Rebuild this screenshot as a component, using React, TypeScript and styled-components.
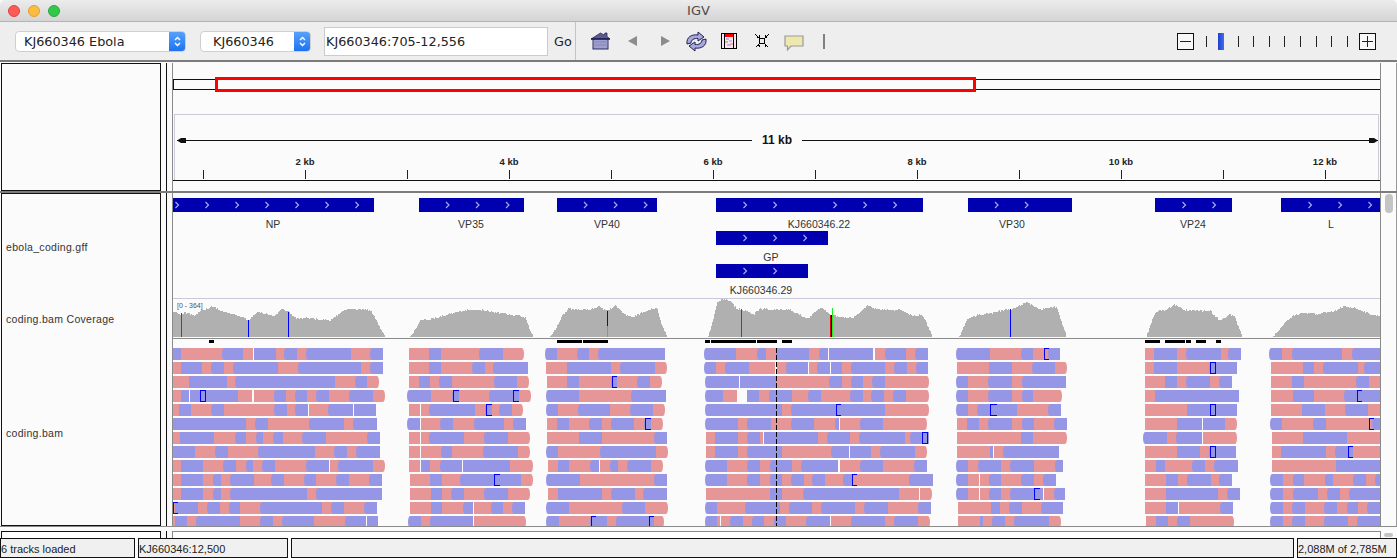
import React from "react";
import styled, { createGlobalStyle } from "styled-components";

const Global = createGlobalStyle`
  html, body { margin: 0; padding: 0; background: #fafafa; overflow: hidden; }
  * { box-sizing: border-box; }
`;

const Win = styled.div`
  width: 1397px; height: 558px; display: flex; flex-direction: column; overflow: hidden; background: #fafafa;
  font-family: "Liberation Sans", Arial, sans-serif; color: #222;
`;
const TitleBar = styled.div`
  height: 22px; flex: none; position: relative; display: flex; align-items: center; justify-content: center;
  background: linear-gradient(#ececec, #d4d4d4); border-bottom: 1px solid #b4b4b4;
  font: 13px "DejaVu Sans", sans-serif; color: #4c4c4c; border-radius: 5px 5px 0 0;
`;
const Lights = styled.div`
  position: absolute; left: 8px; top: 5px; display: flex; gap: 8px;
`;
const Light = styled.span<{ $c: string; $b: string }>`
  width: 12px; height: 12px; border-radius: 50%; background: ${p => p.$c}; border: 1px solid ${p => p.$b};
`;
const Toolbar = styled.div`
  height: 38px; flex: none; display: flex; align-items: center; background: #eeeeee;
  font: 12.8px "DejaVu Sans", sans-serif; color: #222;
`;
const SearchGroup = styled.div`
  width: 576px; height: 100%; display: flex; align-items: center; padding-left: 15px; border-right: 1px solid #c4c4c4; flex: none;
`;
const Combo = styled.div<{ $w: number; $pad: number; $ml?: number }>`
  width: ${p => p.$w}px; height: 21px; margin-left: ${p => p.$ml ?? 0}px; display: flex; align-items: center; justify-content: space-between;
  padding-left: ${p => p.$pad}px; background: #fff; border: 1px solid #cfcfcf; border-radius: 4px; overflow: hidden;
`;
const Stepper = styled.span`
  width: 17px; height: 21px; margin: -1px; background: linear-gradient(#5aa3fb, #1b70ef); display: flex; align-items: center; justify-content: center;
`;
const Locus = styled.div`
  width: 224px; height: 29px; margin-left: 13px; padding-left: 1px; background: #fff; border: 1px solid #cbcbcb; display: flex; align-items: center;
`;
const Go = styled.span`
  margin-left: 6px;
`;
const ToolIcon = styled.span<{ $ml: number; $mt?: number }>`
  display: flex; margin-left: ${p => p.$ml}px; margin-top: ${p => p.$mt ?? 0}px; flex: none;
`;
const ZoomBox = styled.div`
  margin-left: auto; margin-right: 21px; width: 199px; height: 17px; position: relative; display: flex; align-items: center; justify-content: space-between; flex: none;
`;
const ZoomBtn = styled.span`
  width: 17px; height: 17px; border: 1px solid #111; background: #f8f8f8; display: flex; align-items: center; justify-content: center;
`;
const ZoomTick = styled.span<{ $x: number }>`
  position: absolute; left: ${p => p.$x}px; top: 3px; width: 1px; height: 11px; background: #222;
`;
const ZoomThumb = styled.span`
  position: absolute; left: 41px; top: 0; width: 6px; height: 17px; background: linear-gradient(90deg, #1f3fc8, #3f6ff0);
`;
const Divider = styled.div<{ $h?: number; $mb?: number }>`
  height: ${p => p.$h ?? 2}px; margin-bottom: ${p => p.$mb ?? 0}px; background: #7c7c7c; flex: none;
`;
const PanelRow = styled.div<{ $h: number }>`
  height: ${p => p.$h}px; flex: none; display: flex; padding-left: 1px;
`;
const NamePanel = styled.div`
  width: 160px; height: 100%; border: 1px solid #111; background: #fbfbfb; position: relative; flex: none;
`;
const AttrA = styled.div`
  width: 6px; flex: none; border-right: 1px solid #111;
`;
const AttrB = styled.div`
  width: 5px; flex: none;
`;
const DataPanel = styled.div`
  width: 1209px; flex: none; border-left: 1px solid #8a8a8a; border-right: 1px solid #8a8a8a; display: flex; flex-direction: column; position: relative; background: #fbfbfb;
`;
const ScrollCol = styled.div`
  flex: 1; border-right: 1px solid #9a9a9a; position: relative; background: #fbfbfb;
`;
const VThumb = styled.span`
  position: absolute; left: 4px; top: 1px; width: 8px; height: 19px; border-radius: 4px; background: #c4c4c4;
`;
const ChromoStrip = styled.div`
  height: 51px; flex: none; padding-top: 16px; position: relative;
`;
const Chromo = styled.div`
  height: 11px; border: 1px solid #111; border-width: 1px 0 1px 1px; background: #fbfbfb; position: relative;
`;
const RedBox = styled.div`
  position: absolute; left: 41px; top: -3px; width: 761px; height: 15px; border: 3px solid #f00;
`;
const Ruler = styled.div`
  height: 66px; flex: none; position: relative; border: 1px solid #cbcbdc; border-bottom: none; margin-left: 1px; margin-right: 1px;
`;
const SpanLine = styled.svg`
  position: absolute; left: -1px; top: 20px;
`;
const SpanLabel = styled.span`
  position: absolute; left: 577px; top: 18px; width: 50px; text-align: center; background: #fbfbfb; font-weight: 700; font-size: 12px; line-height: 14px; color: #111;
`;
const RulerTick = styled.span<{ $x: number }>`
  position: absolute; left: ${p => p.$x - 175}px; top: 55px; width: 1px; height: 9px; background: #222;
`;
const RulerLabel = styled.span<{ $x: number }>`
  position: absolute; left: ${p => p.$x - 175 - 25}px; width: 50px; top: 41px; text-align: center; font-size: 9.5px; font-weight: 700; line-height: 12px; color: #222;
`;
const RulerFoot = styled.div`
  flex: 1; border-top: 1px solid #111; margin-top: 0;
`;
const TrackLabel = styled.span<{ $y: number }>`
  position: absolute; left: 4px; top: ${p => p.$y}px; font-size: 10.5px; letter-spacing: 0.3px; line-height: 12px; color: #333; white-space: nowrap;
`;
const FeatureTrack = styled.div`
  height: 106px; flex: none; position: relative; border-bottom: 1px solid #c9c9da;
`;
const Feature = styled.div<{ $x: number; $w: number; $y: number }>`
  position: absolute; left: ${p => p.$x - 173}px; top: ${p => p.$y}px; width: ${p => p.$w}px; height: 14px; background: #0000b0;
`;
const FeatureSvg = styled.svg`
  display: block;
`;
const FeatureName = styled.span<{ $x: number; $y: number }>`
  position: absolute; left: ${p => p.$x - 173 - 50}px; top: ${p => p.$y}px; width: 100px; text-align: center; font-size: 10.5px; letter-spacing: 0.05px; line-height: 12px; color: #333;
`;
const CoverageTrack = styled.div`
  height: 40px; flex: none; position: relative; border-bottom: 1.5px solid #8a8a8a;
`;
const RangeLabel = styled.span`
  position: absolute; left: 4px; top: 2px; font-size: 7px; line-height: 9px; color: #555;
`;
const Canvas = styled.svg`
  display: block;
`;
const Footer = styled.div`
  height: 12px; flex: none; display: flex; padding-left: 1px; padding-top: 4px; border-top: 1px solid #8a8a8a; position: relative; background: #fbfbfb;
`;
const FootName = styled.div`
  width: 160px; flex: none; border-top: 1px solid #111; border-left: 1px solid #111; border-right: 1px solid #111; background: #fff;
`;
const FootData = styled.div`
  width: 1209px; flex: none; border-left: 1px solid #8a8a8a; border-top: 1px solid #8a8a8a; border-right: 1px solid #8a8a8a; background: #fff;
`;
const HThumb = styled.span`
  position: absolute; right: 4px; top: 6px; width: 9px; height: 4px; border-radius: 2px; background: #c4c4c4;
`;
const StatusBar = styled.div`
  height: 20px; flex: none; display: flex; background: #fbfbfb;
`;
const StatusCell = styled.div<{ $w: number; $ml?: number }>`
  width: ${p => p.$w}px; margin-left: ${p => p.$ml ?? 0}px; flex: none; height: 20px; border: 1px solid #111; background: #f0f0f0; padding-left: 0;
  font-size: 11px; line-height: 20px; color: #222; white-space: nowrap; overflow: hidden;
`;

/* ---- data ---- */
const PINK = "rgb(230,150,150)";
const BLUE = "rgb(150,150,230)";

type Cl = { o: number; rows: string[] };
const clusters: Cl[] = [
  { o: 170, rows: [
    "b8 p34 b160 p220 w249 b252 p318 b346 p381 b412 p543 b604 e639",
    "p8 b34 p96 b127 p162 b193 p324 b388 p573 b604 e639",
    "p8 b57 p171 b199 p495 b559 p591 e627",
    "p8 b33 w57 b60 p204 w246 p252 b314 p348 b379 p411 b442 p477 b541 p609 e645",
    "p8 b28 p63 b127 p162 b316 p351 b379 w414 p417 b478 w548 b551 e618",
    "b8 p228 b258 p294 b421 p522 b553 e621",
    "p8 b30 p132 b198 p228 b261 p279 b312 p339 b400 p468 b595 e630",
    "b8 p75 b139 p174 b268 p435 b496 p531 b562 e630",
    "p8 b34 p99 b163 p198 b231 p249 b280 p315 b412 w477 p480 b508 p609 e645",
    "p8 b34 p99 b132 p153 b184 p252 b306 p342 b406 p438 b502 p537 b601 e636",
    "p8 b34 p99 b132 p153 b184 p411 b442 e636",
    "p8 b16 p84 b115 p150 b180 p210 b274 p456 b487 p522 b586 e621",
    "p9 b16 p51 b81 p210 b274 p310 b340 p432 b528 w588 b591 e624",
  ] },
  { o: 170, rows: [
    "p717 b778 p813 b931 p999 e1062",
    "p717 b778 p813 b910 p945 b973 e1074",
    "p717 b748 p780 b810 p846 b976 p1041 e1077",
    "b715 p783 b849 p867 b961 p1048 e1082",
    "p717 w750 p753 b781 p915 b948 p966 b991 p1026 e1060",
    "b715 w750 p753 b814 p849 b915 p1002 b1033 e1068",
    "p717 w750 p753 b781 p882 b946 p1014 e1080",
    "p717 w750 p753 b815 p846 b943 p1044 e1080",
    "p717 w750 b753 p780 b814 w876 b879 p1020 e1088",
    "p720 b781 p816 b874 p1053 e1088",
    "p720 b784 p816 b847 p882 b946 p1014 e1080",
    "p720 b784 p816 b882 w909 p912 b967 p1000 b1030 e1065",
    "b717 p753 b784 w909 p912 e1067",
  ] },
  { o: 540, rows: [
    "b18 p51 b113 p147 b178 e375",
    "p18 b81 p213 b243 p345 e381",
    "p21 b81 p117 b216 p231 b295 p330 e366",
    "b20 p117 b277 e378",
    "b20 p54 b118 p210 b274 p339 e375",
    "p21 b52 p87 b151 p186 b217 p282 b316 p333 e369",
    "p21 b118 p186 b346 e381",
    "b20 p54 b184 p348 e384",
    "p24 b55 p87 b153 w177 p180 b213 p234 b265 p333 e369",
    "b22 p120 b346 e381",
    "p24 b55 p186 b217 p285 b313 e381",
    "b22 p87 b249 p315 e384",
    "b22 p57 b153 p201 b232 p342 e372",
  ] },
  { o: 540, rows: [
    "b494 p588 b654 p678 b711 p807 b840 w864 b867 w999 p1005 b1038 p1098 b1129 e1164",
    "b494 p528 b558 p627 w705 p711 b740 w804 p807 b835 w870 b873 p906 b937 p1035 b1066 p1101 b1131 e1164",
    "b497 w597 b600 p708 b871 p906 b937 p969 b1000 p1035 e1166",
    "b497 p550 w591 b622 p657 b689 p756 b808 p843 b934 p969 b997 p1032 b1063 p1098 e1166",
    "b497 p726 b757 p1035 e1166",
    "b497 p594 b625 p693 b757 p822 b888 w897 p900 b962 p1029 e1160",
    "p498 b526 p594 b625 p660 w669 b672 p834 b865 p930 b961 p1095 b1113 e1166",
    "p498 b526 p594 b625 p726 b877 w928 b931 p993 b1024 p1125 e1160",
    "b497 p561 b625 p660 b693 p756 b787 w894 p900 b962 p1029 b1126 e1160",
    "b497 p561 b625 p660 b692 p726 b757 p792 b820 p855 b912 p937 b1111 e1178",
    "p498 b691 p726 b792 p1077 w1137 p1140 e1175",
    "b497 p531 b619 p720 b751 p816 b847 p945 b976 p1044 b1138 e1172",
    "b497 p531 w540 p543 b574 p609 b640 p672 b705 p738 b801 w870 p873 b937 p1035 b1066 p1134 e1170",
  ] },
  { o: 950, rows: [
    "b20 p120 b215 p249 b296 e330",
    "p21 b118 p186 b249 p315 e350",
    "b20 p54 b118 p186 b219 e348",
    "b20 p54 b118 p186 b219 p249 e336",
    "b20 p54 b85 p201 b298 e333",
    "p21 b52 p87 b118 p186 b219 p252 b316 e351",
    "p21 b214 p249 e350",
    "p21 b120 w129 p132 b163 e327",
    "b22 p54 b88 p153 b184 p252 b318 e339",
    "b22 p54 w88 p90 b121 p153 b217 p252 b283 e318",
    "b22 p54 w88 p90 b121 p153 b184 w280 p283 b315 e345",
    "p24 b123 p150 b181 p216 b277 e339",
    "p24 b90 p99 b130 p165 b196 p297 e333",
  ] },
  { o: 950, rows: [
    "p585 b612 p681 b712 p813 b838 e873",
    "p585 b612 p681 b780 e861",
    "p585 b646 p681 b712 p780 b811 e846",
    "p585 b616 e867",
    "p585 b712 e861",
    "p585 b682 w756 b759 p825 e861",
    "b583 p651 b682 w756 p759 e861",
    "p585 b682 p750 b780 e858",
    "p585 b618 p645 b730 p765 b796 e864",
    "p585 b649 p684 b715 p783 b811 e846",
    "p585 b649 p804 b835 e870",
    "p585 b649 w684 p687 b814 e849",
    "p588 b619 p654 b685 p720 e852",
  ] },
  { o: 950, rows: [
    "b960 p996 b1029 p1176 b1209 e1290",
    "p963 b1060 p1092 b1123 p1224 b1245 e1290",
    "p963 b1027 p1062 b1222 p1257 e1290",
    "p963 b1029 p1092 b1186 e1290",
    "p963 b1057 p1125 b1189 p1254 e1290",
    "b963 p996 b1093 p1128 b1269 e1290",
    "p966 b1060 p1191 e1290",
    "p966 b994 p1128 b1159 p1209 e1290",
    "p966 b1159 e1290",
    "b964 p999 b1032 p1062 b1128 p1149 b1213 p1248 b1278 e1290",
    "b964 p999 b1032 p1104 b1134 p1170 b1201 e1290",
    "b964 p999 b1030 p1065 b1126 p1161 b1194 p1224 b1255 e1290",
    "b964 p999 b1030 p1065 b1126 p1194 b1225 e1290",
  ] },
];

const READ_X0 = 173;
const READ_Y0 = 339;

const brackets: [number, number, number, number, boolean][] = [
  [170, 3, 90, 17, true], [170, 3, 849, 18, false], [170, 3, 1030, 18, false], [170, 4, 948, 18, false],
  [170, 9, 973, 17, false], [170, 11, 8, 14, false],
  [540, 2, 216, 16, false], [540, 5, 316, 18, false], [540, 6, 1147, 19, true], [540, 4, 888, 16, false],
  [540, 9, 937, 16, false], [540, 12, 153, 14, false], [540, 12, 328, 14, false],
  [950, 0, 283, 16, false], [950, 1, 780, 17, true], [950, 4, 121, 22, false], [950, 4, 780, 17, true],
  [950, 7, 780, 17, true], [950, 10, 253, 19, false], [950, 3, 1222, 16, false], [950, 5, 1258, 16, false],
  [950, 7, 1195, 16, false],
];

type Pt = [number, number];
const cov: { o: number; pts: Pt[] }[] = [
  { o: 170, pts: [[8,45],[30,55],[50,50],[70,60],[90,45],[110,38],[130,30],[150,45],[180,52],[210,62],[235,72],[260,48],[290,55],[310,62],[335,38],[355,48],[380,68],[420,65],[440,70],[480,72],[520,42],[540,38],[600,42],[620,75],[635,108],[645,122]] },
  { o: 170, pts: [[720,122],[740,90],[750,72],[790,68],[850,50],[900,40],[950,44],[1000,52],[1040,58],[1065,65],[1080,105],[1090,122]] },
  { o: 540, pts: [[28,122],[45,100],[65,60],[85,38],[120,42],[150,40],[175,30],[200,45],[225,28],[250,55],[280,62],[310,48],[350,34],[365,90],[381,122]] },
  { o: 540, pts: [[502,122],[515,85],[530,20],[545,8],[570,15],[590,40],[605,40],[640,55],[660,38],[700,42],[750,42],[800,68],[840,35],[870,55],[905,65],[940,65],[980,30],[1020,42],[1080,42],[1120,60],[1145,55],[1160,85],[1178,122]] },
  { o: 950, pts: [[27,122],[50,70],[80,58],[130,50],[165,42],[185,40],[230,18],[270,40],[320,32],[335,85],[350,122]] },
  { o: 950, pts: [[588,122],[615,48],[650,40],[672,24],[700,42],[780,45],[810,75],[835,55],[852,60],[876,122]] },
  { o: 950, pts: [[968,122],[1000,85],[1025,60],[1060,50],[1100,55],[1150,45],[1180,32],[1210,35],[1260,55],[1290,60]] },
];

const COV_Y0 = 299;
const jitter = (x: number) => {
  const s = Math.sin(x * 12.9898) * 43758.5453;
  return (s - Math.floor(s)) * 2 - 1;
};
const covPath = (c: { o: number; pts: Pt[] }) => {
  const first = Math.ceil(c.o + c.pts[0][0] / 3);
  const last = Math.floor(c.o + c.pts[c.pts.length - 1][0] / 3);
  const base = 296 + 123 / 3 - COV_Y0;
  let d = `M${first - READ_X0} ${base}`;
  for (let x = first; x < last; x++) {
    const zx = (x - c.o) * 3;
    let i = 0;
    while (i < c.pts.length - 2 && c.pts[i + 1][0] < zx) i++;
    const [ax, ay] = c.pts[i];
    const [bx, by] = c.pts[i + 1];
    const t = Math.max(0, Math.min(1, (zx - ax) / (bx - ax)));
    const zy = ay + (by - ay) * t;
    const y = Math.min(base, Math.round(296 + zy / 3 - COV_Y0 + jitter(x) * 0.9));
    d += `V${y}H${x + 1 - READ_X0}`;
  }
  return d + `V${base}Z`;
};

const mism: [number, number, number, string][] = [
  [170 + 34 / 3, 50, 122, "#c81e1e"], [170 + 235 / 3, 72, 122, "#0000ff"], [170 + 355 / 3, 48, 122, "#0000ff"],
  [540 + 202 / 3, 45, 90, "#0000ff"], [540 + 202 / 3, 90, 122, "#22dd22"], [540 + 604 / 3, 40, 122, "#c81e1e"],
  [540 + 871 / 3, 57, 122, "#e00000"], [540 + 874 / 3, 57, 122, "#000"], [540 + 877 / 3, 35, 122, "#22ee22"],
  [950 + 181 / 3, 40, 122, "#0000ff"],
];

const gaps: [number, number, number][] = [
  [170, 117, 132],
  [540, 51, 126], [540, 129, 204], [540, 495, 510], [540, 513, 648], [540, 651, 711], [540, 726, 756],
  [950, 585, 630], [950, 645, 705], [950, 708, 723], [950, 738, 768], [950, 798, 813],
];

const features: { x: number; w: number; y: number; ch: number[]; name: string; nx: number; ny: number }[] = [
  { x: 173, w: 201, y: 5, ch: [177, 207, 237, 267, 297, 327, 357], name: "NP", nx: 273, ny: 25 },
  { x: 419, w: 105, y: 5, ch: [447.5, 477.5, 507.5], name: "VP35", nx: 471, ny: 25 },
  { x: 557, w: 100, y: 5, ch: [585.5, 615.5, 645.5], name: "VP40", nx: 607, ny: 25 },
  { x: 716, w: 207, y: 5, ch: [745, 775, 835, 865, 895], name: "KJ660346.22", nx: 819, ny: 25 },
  { x: 968, w: 104, y: 5, ch: [996.5, 1026.5], name: "VP30", nx: 1012, ny: 25 },
  { x: 1155, w: 77, y: 5, ch: [1184, 1214], name: "VP24", nx: 1193, ny: 25 },
  { x: 1281, w: 99, y: 5, ch: [1310, 1340, 1370], name: "L", nx: 1331, ny: 25 },
  { x: 716, w: 112, y: 38, ch: [745, 775, 805], name: "GP", nx: 771, ny: 58 },
  { x: 716, w: 92, y: 71, ch: [745, 775], name: "KJ660346.29", nx: 761, ny: 91 },
];

const Chevrons = ({ f }: { f: { x: number; w: number; ch: number[] } }) => (
  <FeatureSvg width={f.w} height={14}>
    {f.ch.map(c => (
      <path key={c} d={`M${c - f.x - 1.5} 4 L${c - f.x + 1.5} 7 L${c - f.x - 1.5} 10`} fill="none" stroke="#a8a8f0" strokeWidth={1.2} />
    ))}
  </FeatureSvg>
);

/* one coloured stretch of a read; an end that is curved is the read's pointed tip */
const segPath = (x: number, y: number, w: number, left: boolean, right: boolean) => {
  const h = 12;
  const l = left ? `M${x + 2} ${y}A2 6 0 0 0 ${x + 2} ${y + h}` : `M${x} ${y}V${y + h}`;
  const r = right ? `H${x + w - 2}A2 6 0 0 0 ${x + w - 2} ${y}` : `H${x + w}V${y}`;
  return `${l}${r}Z`;
};

const Reads = () => {
  const pinks: React.ReactElement[] = [];
  const blues: React.ReactElement[] = [];
  clusters.forEach((c, ci) => {
    c.rows.forEach((r, ri) => {
      const toks = r.split(" ").map(t => ({ k: t[0], v: Math.round(c.o + Number(t.slice(1)) / 3) - READ_X0 }));
      const y = 348 + ri * 14 - READ_Y0;
      for (let i = 0; i < toks.length - 1; i++) {
        const a = toks[i], b = toks[i + 1];
        if (a.k === "w") continue;
        const key = `${ci}-${ri}-${i}`;
        const isLast = i === toks.length - 2 && a.v + (b.v - a.v) < 1207;
        if (a.k === "p") {
          const extend = b.k === "b" ? 2 : 0;
          pinks.push(<path key={key} d={segPath(a.v, y, b.v - a.v + extend, false, isLast)} fill={PINK} />);
        } else {
          const prev = toks[i - 1];
          const curved = (prev && prev.k === "p" && i > 1) || (i === 0 && a.v > 4);
          blues.push(<path key={key} d={segPath(a.v - (curved ? 1 : 0), y, b.v - a.v + (curved ? 1 : 0), !!curved, false)} fill={BLUE} />);
        }
      }
    });
  });
  return (
    <Canvas width={1207} height={187}>
      <g shapeRendering="crispEdges">
        {gaps.map(([o, a, b], i) => (
          <rect key={i} x={o + a / 3 - READ_X0} y={340 - READ_Y0} width={(b - a) / 3} height={3} fill="#000" />
        ))}
      </g>
      {pinks}
      {blues}
      <g shapeRendering="crispEdges">
        {brackets.map(([o, row, zx, zw, closed], i) => {
          const x = Math.round(o + zx / 3 - READ_X0) + 0.5;
          const y = 348 + row * 14 - READ_Y0 + 0.5;
          const w = Math.round(zw / 3) - 1;
          return (
            <path key={i} d={closed ? `M${x} ${y}h${w}v11h-${w}Z` : `M${x + w} ${y}h-${w}v11h${w}`} fill="none" stroke="#0000ff" strokeWidth={1} />
          );
        })}
        <line x1={776.5 - READ_X0} x2={776.5 - READ_X0} y1={348 - READ_Y0} y2={187} stroke="#000" strokeDasharray="5 2" />
      </g>
    </Canvas>
  );
};

const Coverage = () => (
  <Canvas width={1207} height={38}>
    <g shapeRendering="crispEdges">
      {cov.map((c, i) => <path key={i} d={covPath(c)} fill="#b0b0b0" />)}
      {mism.map(([x, a, b, col], i) => (
        <rect key={i} x={Math.round(x) - READ_X0} y={296 + a / 3 - COV_Y0} width={1} height={(b - a) / 3} fill={col} />
      ))}
    </g>
  </Canvas>
);

/* ---- icons ---- */
const StepIcon = () => (
  <svg width="9" height="13" viewBox="0 0 9 13">
    <path d="M2 5 L4.5 2.5 L7 5 M2 8 L4.5 10.5 L7 8" fill="none" stroke="#fff" strokeWidth="1.4" />
  </svg>
);
const HomeIcon = () => (
  <svg width="21" height="18" viewBox="0 0 21 18">
    <path d="M1 7 L10.5 1 L14 3 L15 1 L17 1 L17 4.5 L20 7 Z" fill="#5a5a90" stroke="#2a2a60" strokeWidth="0.8" />
    <rect x="3" y="7" width="15" height="10" fill="#a0a0d0" stroke="#2a2a60" />
    <path d="M3 10h15M3 13h15" stroke="#8484b8" strokeWidth="1" />
    <path d="M1 7h19" stroke="#1e1e50" strokeWidth="1.4" />
  </svg>
);
const TriLeft = () => (
  <svg width="9" height="10" viewBox="0 0 9 10"><path d="M9 0 V10 L0 5 Z" fill="#8c8c8c" /></svg>
);
const TriRight = () => (
  <svg width="9" height="10" viewBox="0 0 9 10"><path d="M0 0 V10 L9 5 Z" fill="#8c8c8c" /></svg>
);
const RefreshIcon = () => (
  <svg width="21" height="21" viewBox="0 0 21 21">
    <path d="M1 13 C0 6 6 3 12 4 L12 1 L18 6 L12 10 L12 7.5 C8 7 5 9 5 12 Z" fill="#a8a8e0" stroke="#20204e" strokeWidth="1" />
    <path d="M20 8 C21 15 15 18 9 17 L9 20 L3 15 L9 11 L9 13.5 C13 14 16 12 16 9 Z" fill="#a8a8e0" stroke="#20204e" strokeWidth="1" />
  </svg>
);
const RegionIcon = () => (
  <svg width="16" height="16" viewBox="0 0 16 16" shapeRendering="crispEdges">
    <rect x="0.5" y="0.5" width="15" height="15" fill="#f6e8ee" stroke="#000" />
    <rect x="4" y="1" width="8" height="3" fill="#f00" />
    <path d="M3.5 1v14M12.5 1v14" stroke="#000" />
    <rect x="5" y="5" width="3" height="2" fill="#b8b8ee" /><rect x="8" y="7" width="3" height="2" fill="#c0c0f0" />
    <rect x="4" y="8" width="3" height="2" fill="#e8a8a8" /><rect x="6" y="11" width="4" height="2" fill="#b8b8ee" />
    <rect x="9" y="10" width="3" height="2" fill="#e8b0b0" />
  </svg>
);
const FitIcon = () => (
  <svg width="14" height="14" viewBox="0 0 14 14" shapeRendering="crispEdges">
    <rect x="4.5" y="4.5" width="5" height="5" fill="none" stroke="#000" />
    <path d="M0.5 0.5 L3.5 3.5 M13.5 0.5 L10.5 3.5 M0.5 13.5 L3.5 10.5 M13.5 13.5 L10.5 10.5" stroke="#000" />
    <path d="M2 3h2v-2M12 3h-2v-2M2 11h2v2M12 11h-2v2" stroke="#000" fill="none" />
  </svg>
);
const CommentIcon = () => (
  <svg width="20" height="16" viewBox="0 0 20 16">
    <path d="M1 1 H19 V11 H7 L3.5 15 V11 H1 Z" fill="#efe8ae" stroke="#9a9a9a" strokeWidth="1.2" />
  </svg>
);
const TallBar = styled.span`
  width: 2px; height: 15px; background: #808080; margin-left: 19px; flex: none;
`;
const MinusPlus = ({ plus }: { plus?: boolean }) => (
  <svg width="13" height="13" viewBox="0 0 13 13" shapeRendering="crispEdges">
    <path d={plus ? "M1 6.5h11M6.5 1v11" : "M1 6.5h11"} stroke="#222" />
  </svg>
);

const rulerTicks = [203, 305, 407, 509, 611, 713, 815, 917, 1019, 1121, 1223, 1325];
const rulerLabels: [number, string][] = [[305, "2 kb"], [509, "4 kb"], [713, "6 kb"], [917, "8 kb"], [1121, "10 kb"], [1325, "12 kb"]];
const zoomTicks = [29, 61, 76, 92, 107, 123, 139, 154, 170];

export default function App() {
  return (
    <Win>
      <Global />
      <TitleBar>
        <Lights>
          <Light $c="#fc5b57" $b="#e0443e" />
          <Light $c="#fdbc40" $b="#dea034" />
          <Light $c="#34c84a" $b="#28a93b" />
        </Lights>
        IGV
      </TitleBar>
      <Toolbar>
        <SearchGroup>
          <Combo $w={171} $pad={8}>KJ660346 Ebola<Stepper><StepIcon /></Stepper></Combo>
          <Combo $w={111} $pad={12} $ml={14}>KJ660346<Stepper><StepIcon /></Stepper></Combo>
          <Locus>KJ660346:705-12,556</Locus>
          <Go>Go</Go>
        </SearchGroup>
        <ToolIcon $ml={14}><HomeIcon /></ToolIcon>
        <ToolIcon $ml={17}><TriLeft /></ToolIcon>
        <ToolIcon $ml={24}><TriRight /></ToolIcon>
        <ToolIcon $ml={16}><RefreshIcon /></ToolIcon>
        <ToolIcon $ml={14}><RegionIcon /></ToolIcon>
        <ToolIcon $ml={18}><FitIcon /></ToolIcon>
        <ToolIcon $ml={15} $mt={4}><CommentIcon /></ToolIcon>
        <TallBar />
        <ZoomBox>
          <ZoomBtn><MinusPlus /></ZoomBtn>
          {zoomTicks.map(x => <ZoomTick key={x} $x={x} />)}
          <ZoomThumb />
          <ZoomBtn><MinusPlus plus /></ZoomBtn>
        </ZoomBox>
      </Toolbar>
      <Divider $h={2} $mb={1} />
      <PanelRow $h={128}>
        <NamePanel />
        <AttrA />
        <AttrB />
        <DataPanel>
          <ChromoStrip>
            <Chromo><RedBox /></Chromo>
          </ChromoStrip>
          <Ruler>
            <SpanLine width={1207} height={12}>
              <path d="M3 5.5H1204" stroke="#111" strokeWidth="1" />
              <path d="M3 5.5 L7 3 H12 V8 H7 Z M1204 5.5 L1200 3 H1195 V8 H1200 Z" fill="#111" />
            </SpanLine>
            <SpanLabel>11 kb</SpanLabel>
            {rulerTicks.map(x => <RulerTick key={x} $x={x} />)}
            {rulerLabels.map(([x, t]) => <RulerLabel key={t} $x={x}>{t}</RulerLabel>)}
          </Ruler>
          <RulerFoot />
        </DataPanel>
        <ScrollCol />
      </PanelRow>
      <Divider $h={2} />
      <PanelRow $h={333}>
        <NamePanel>
          <TrackLabel $y={47}>ebola_coding.gff</TrackLabel>
          <TrackLabel $y={119}>coding.bam Coverage</TrackLabel>
          <TrackLabel $y={233}>coding.bam</TrackLabel>
        </NamePanel>
        <AttrA />
        <AttrB />
        <DataPanel>
          <FeatureTrack>
            {features.map(f => (
              <Feature key={f.name} $x={f.x} $w={f.w} $y={f.y}><Chevrons f={f} /></Feature>
            ))}
            {features.map(f => (
              <FeatureName key={f.name} $x={f.nx} $y={f.ny}>{f.name}</FeatureName>
            ))}
          </FeatureTrack>
          <CoverageTrack>
            <Coverage />
            <RangeLabel>[0 - 364]</RangeLabel>
          </CoverageTrack>
          <Reads />
        </DataPanel>
        <ScrollCol><VThumb /></ScrollCol>
      </PanelRow>
      <Footer>
        <FootName />
        <AttrA />
        <AttrB />
        <FootData />
        <HThumb />
      </Footer>
      <StatusBar>
        <StatusCell $w={135}>6 tracks loaded</StatusCell>
        <StatusCell $w={150} $ml={3}>KJ660346:12,500</StatusCell>
        <StatusCell $w={1003} $ml={3} />
        <StatusCell $w={100} $ml={3}>2,088M of 2,785M</StatusCell>
      </StatusBar>
    </Win>
  );
}
